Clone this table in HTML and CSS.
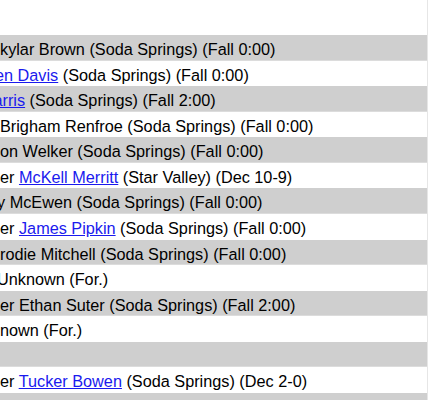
FILE: index.html
```html
<!DOCTYPE html>
<html>
<head>
<meta charset="utf-8">
<link rel="stylesheet" href="styles.css">
</head>
<body>
<div class="results">
  <div class="row alt"><span class="line o0">kylar Brown (Soda Springs) (Fall 0:00)</span></div>
  <div class="row"><span class="line o5"><a href="#">en Davis</a> (Soda Springs) (Fall 0:00)</span></div>
  <div class="row alt"><span class="line o6"><a href="#">arris</a> (Soda Springs) (Fall 2:00)</span></div>
  <div class="row"><span class="line o0">Brigham Renfroe (Soda Springs) (Fall 0:00)</span></div>
  <div class="row alt"><span class="line o0">on Welker (Soda Springs) (Fall 0:00)</span></div>
  <div class="row"><span class="line o0">er <a href="#">McKell Merritt</a> (Star Valley) (Dec 10-9)</span></div>
  <div class="row alt"><span class="line o3">y McEwen (Soda Springs) (Fall 0:00)</span></div>
  <div class="row"><span class="line o0">er <a href="#">James Pipkin</a> (Soda Springs) (Fall 0:00)</span></div>
  <div class="row alt"><span class="line o0">rodie Mitchell (Soda Springs) (Fall 0:00)</span></div>
  <div class="row"><span class="line o3">Unknown (For.)</span></div>
  <div class="row alt"><span class="line o0">er Ethan Suter (Soda Springs) (Fall 2:00)</span></div>
  <div class="row"><span class="line o0">nown (For.)</span></div>
  <div class="row alt"><span class="line o0"></span></div>
  <div class="row"><span class="line o0">er <a href="#">Tucker Bowen</a> (Soda Springs) (Dec 2-0)</span></div>
  <div class="row alt"><span class="line o0"></span></div>
</div>
</body>
</html>
```

FILE: styles.css
```css
html, body {
  margin: 0;
  padding: 0;
  background: #fff;
  overflow: hidden;
}
body {
  font-family: "Liberation Sans", Arial, sans-serif;
  font-size: 16.25px;
  color: #000;
}
.results {
  padding-top: 35px;
  width: 427px;
  border-right: 1px solid #e6e6e6;
  overflow: hidden;
}
.row {
  height: 25.571px;
  box-sizing: border-box;
  padding-top: 5px;
  line-height: 18px;
  white-space: nowrap;
  overflow: hidden;
}
.row.alt {
  background: #cfcfcf;
  box-shadow: inset 0 -1px 0 #dcdcdc;
}
.line { display: inline-block; }
.o0 { margin-left: 0; }
.o3 { margin-left: -3px; }
.o5 { margin-left: -5px; }
.o6 { margin-left: -6.5px; }
a { color: #1a1aee; text-decoration: underline; }
```
